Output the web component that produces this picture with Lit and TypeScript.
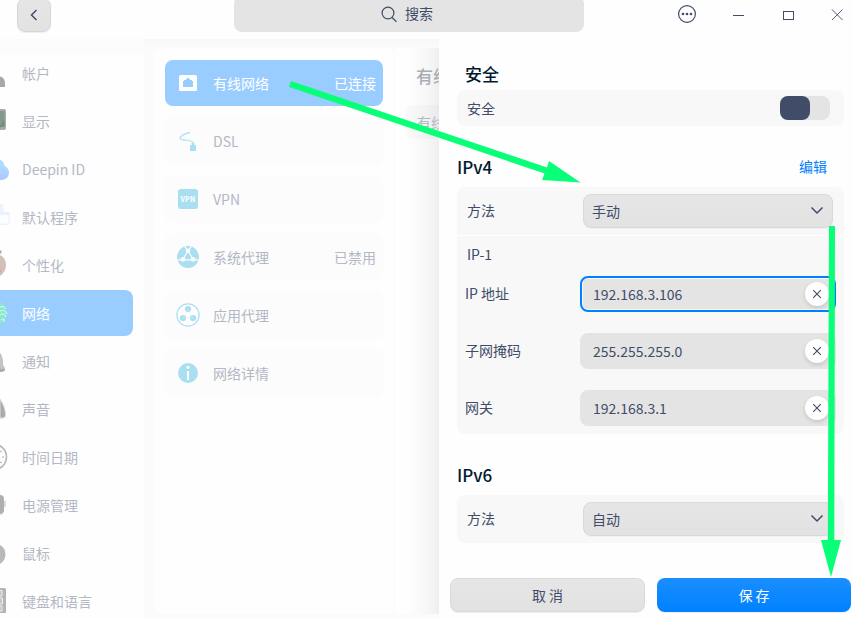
import { LitElement, html, svg, css, nothing, type TemplateResult } from "lit";
import { customElement, property } from "lit/decorators.js";
import { classMap } from "lit/directives/class-map.js";

const chevron = html`<svg width="14" height="9" viewBox="0 0 14 9"><path d="M1.5 1.5 L7 7 L12.5 1.5" fill="none" stroke="#414d68" stroke-width="1.5"/></svg>`;

const navIcons: Record<string, TemplateResult> = {
  user: svg`<path d="M0 27.5 Q5 28 5 35 V38 H0 Z" fill="#a8a8a8"/>`,
  display: svg`<rect x="-16" y="12" width="22" height="21" rx="2" fill="#aaa"/><path d="M0 14 H4.5 V28 L0 31 Z" fill="#84998c"/><path d="M0 29 L4.5 22 V30 H0 Z" fill="#71907b"/>`,
  cloud: svg`<path d="M0 14.5 Q4 16 4.5 21 Q9 23 9 28 Q8.5 34 2 35 H0 Z" fill="url(#cloud)"/>`,
  apps: svg`<path d="M0 11 H1.5 Q3.5 11 3.5 13.5 V20 H0 Z" fill="#ebf5ff"/><path d="M-2 19.5 H9.3 V29.5 Q9.3 31.3 7.5 31.3 H-2 Z" fill="#fbfdff" stroke="#e0eeff" stroke-width=".8"/><path d="M0 19.5 H9.3 V22 H0 Z" fill="#e8f3ff"/>`,
  look: svg`<path d="M0 9.5 h1.5 v3 H0z" fill="#aaa"/><path d="M0 14 Q6 17 6 24 Q6 31 0 35 Z" fill="#d0c1b8"/><path d="M0 28 L1.2 30 L0 32 Z" fill="#f38bad"/>`,
  net: svg`<circle cx="-5" cy="24" r="12" fill="#8be8cf"/><g fill="none" stroke="#d6fff2" stroke-width="1"><path d="M0 18 Q4 16 6 20 M0 22 Q5 20 7 25 M0 26 Q4 23 6 28 M1 31 Q5 28 4 33"/></g>`,
  bell: svg`<path d="M0 16 Q3 19 3 26 Q3 29 5 31 L4.5 34 Q2 35 0 35 Z" fill="#c3c3c3"/><path d="M0 32 H5 L4.5 34 L0 35Z" fill="#aaa"/>`,
  sound: svg`<path d="M0 14 Q6 23 5.5 31 Q4.5 34 0 33 Z" fill="#aaa" stroke="#dedede"/>`,
  clock: svg`<circle cx="-6" cy="24" r="12.5" fill="#fcfcfc" stroke="#b5b5b5" stroke-width="1.6"/><path d="M0 19 L2 18 M2 24 H4 M0 29 L2 30" stroke="#aaa"/>`,
  power: svg`<rect x="4" y="20" width="2" height="6" fill="#ddd"/><rect x="-14" y="14" width="18" height="19" rx="4" fill="#afafaf"/><path d="M-5 33.7 H3" stroke="#e8edc8" stroke-width="1"/>`,
  mouse: svg`<path d="M0 16 Q5.5 19 5.5 25.5 Q5 32 0 35 Z" fill="#b9b9b9"/>`,
  keys: svg`<path d="M0 11 H5 Q6 11 6 13 V36 H0 Z" fill="#b4b4b4"/><path d="M0 13.5 H2 V19 H0 M0 21 H2.5 V27 H0 M0 29 H2 V34 H0" fill="#c4c4c4" stroke="#eee"/>`,
};

const netIcons: Record<string, TemplateResult> = {
  wired: svg`<rect x="3" y="4" width="18" height="16" rx="1.5" fill="#fff"/><path d="M7 16 V10 H8 V9 H10 V8 H11 V7 H13 V8 H14 V9 H16 V10 H17 V16 Z" fill="#99ccff"/>`,
  dsl: svg`<path d="M14 3.3 C9 4.5 4.5 7 4 9.3 C4 12 16 10.5 16.8 13.5 V16" fill="none" stroke="#a9dff0" stroke-width="1.2"/><path d="M15.5 14 H18.5 V16 H19 Q20 16 20 17 V22 H14 V17 Q14 16 15.5 16 Z" fill="#a9dff0"/>`,
  vpn: svg`<rect x="2" y="2" width="20" height="20" rx="3" fill="#a9dff0"/><text class="vpn" x="12" y="14.7" text-anchor="middle">VPN</text>`,
  system: svg`<circle cx="12" cy="12" r="11" fill="#a9dff0"/><path d="M12 5.5 L7 14.5 M12 5.5 L17 14.5 M0 14.8 H6 M18 14.8 H24 M7 14.8 H17 M8.5 1 L11 5 M15.5 1 L13 5" stroke="#fdfdfd" stroke-width="1.2" fill="none"/><g fill="#fdfdfd"><circle cx="12" cy="5.8" r="2.4"/><circle cx="7" cy="14.3" r="2.4"/><circle cx="17" cy="14.3" r="2.4"/></g>`,
  app: svg`<circle cx="12" cy="12" r="11.1" fill="#fdfdfd" stroke="#a9dff0" stroke-width="1.2"/><g fill="#a9dff0"><circle cx="12" cy="6" r="3.1"/><circle cx="7" cy="15" r="3.1"/><circle cx="17" cy="15" r="3.1"/></g><path d="M12 6 L7 15 H17 Z" fill="none" stroke="#d9f0f8" stroke-width=".5"/>`,
  info: svg`<circle cx="12" cy="12" r="10" fill="#a9dff0"/><circle cx="12" cy="6.4" r="1.6" fill="#fff"/><rect x="11" y="10" width="2.1" height="9" fill="#fff"/>`,
};

const navItems = [
  ["user", "帐户"], ["display", "显示"], ["cloud", "Deepin ID"], ["apps", "默认程序"],
  ["look", "个性化"], ["net", "网络"], ["bell", "通知"], ["sound", "声音"],
  ["clock", "时间日期"], ["power", "电源管理"], ["mouse", "鼠标"], ["keys", "键盘和语言"],
];

const netItems = [
  ["wired", "有线网络", "已连接"], ["dsl", "DSL", ""], ["vpn", "VPN", ""],
  ["system", "系统代理", "已禁用"], ["app", "应用代理", ""], ["info", "网络详情", ""],
];

@customElement("title-bar")
export class TitleBar extends LitElement {
  static styles = css`
    :host { display: grid; grid-template-columns: 234px 350px 1fr; height: 39px; background: #fefefe; color: #414d68; }
    svg { display: block; }
    .back { box-sizing: border-box; width: 34px; height: 34px; margin: -2px 0 0 17px; border: 1px solid #d7d7d7; border-radius: 8px; background: linear-gradient(#e6e6e6, #e2e2e2); display: flex; align-items: center; justify-content: center; box-shadow: 0 1px 1px #0001; }
    .search { height: 36px; margin-top: -4px; border-radius: 8px; background: #e4e4e4; display: flex; align-items: center; gap: 7px; padding-left: 147px; box-sizing: border-box; }
    .search span { padding-bottom: 2px; }
    .window { display: flex; justify-content: flex-end; padding-right: 5px; height: 30px; align-items: center; }
  `;
  render() {
    return html`
      <div><div class="back"><svg width="10" height="14" viewBox="0 0 10 14"><path d="M7.5 2 L2.5 7 L7.5 12" fill="none" stroke="#414d68" stroke-width="1.5"/></svg></div></div>
      <div class="search"><svg width="17" height="17" viewBox="0 0 17 17"><g fill="none" stroke="#414d68" stroke-width="1.2"><circle cx="7" cy="7" r="5.9"/><path d="M11 11.5 L15.5 15.8"/></g></svg><span>搜索</span></div>
      <div class="window">
        <svg width="176" height="30" viewBox="0 0 176 30"><g fill="none" stroke="#414d68"><circle cx="15" cy="14" r="8.4" stroke-width="1.2"/><path d="M61 15.5 H72"/><rect x="111.5" y="11.5" width="10" height="8"/><path d="M160 9.5 L170.5 20 M170.5 9.5 L160 20" stroke-width=".9"/></g><g fill="#414d68"><circle cx="11" cy="14" r="1.3"/><circle cx="15" cy="14" r="1.3"/><circle cx="19" cy="14" r="1.3"/></g></svg>
      </div>`;
  }
}

@customElement("side-nav")
export class SideNav extends LitElement {
  static styles = css`
    :host { display: block; box-sizing: border-box; width: 144px; padding-top: 10px; overflow: hidden; background: linear-gradient(#fbfbfb, #fcfcfc 15px, #fefefe 17px); color: #b3b8c4; }
    .row { box-sizing: border-box; width: 133px; height: 48px; padding: 1px 0; display: flex; align-items: center; }
    .in { display: flex; align-items: center; width: 133px; height: 46px; }
    .on .in { background: #99ccff; border-radius: 0 8px 8px 0; color: #fff; }
    svg { display: block; width: 12px; height: 48px; margin-right: 10px; }
  `;
  render() {
    return html`${navItems.map(([icon, label]) => html`
      <div class=${classMap({ row: true, on: icon === "net" })}><div class="in">
        <svg viewBox="0 0 12 48"><defs><linearGradient id="cloud" x2="0" y2="1"><stop stop-color="#a9e5ff"/><stop offset="1" stop-color="#b0c7ff"/></linearGradient></defs>${navIcons[icon]}</svg><span>${label}</span>
      </div></div>`)}`;
  }
}

@customElement("network-list")
export class NetworkList extends LitElement {
  static styles = css`
    :host { display: flex; flex-direction: column; gap: 10px; box-sizing: border-box; width: 241px; height: 566px; margin: 9px 0 0 10px; padding: 11px 10px 0 10px; border-radius: 8px; background: #fefefe; color: #b3b8c4; border-right: 1px solid #fafafa; }
    .card { box-sizing: border-box; height: 48px; border-radius: 9px; border: 1px solid transparent; background: #fcfcfc; display: flex; align-items: center; padding: 0 7px 0 11px; }
    .on { background: #99ccff; background-clip: padding-box; color: #fff; }
    svg { display: block; margin-right: 13px; }
    .state { margin-left: auto; }
    .vpn { font: bold 7px "Noto Sans CJK SC", sans-serif; fill: #fff; letter-spacing: .3px; }
  `;
  render() {
    return html`${netItems.map(([icon, label, state]) => html`
      <div class=${classMap({ card: true, on: icon === "wired" })}>
        <svg width="24" height="24" viewBox="0 0 24 24">${netIcons[icon]}</svg><span>${label}</span>
        ${state ? html`<span class="state">${state}</span>` : nothing}
      </div>`)}`;
  }
}

@customElement("address-field")
export class AddressField extends LitElement {
  @property() label = "";
  @property() value = "";
  @property({ type: Boolean }) focused = false;
  static styles = css`
    :host { display: flex; align-items: center; height: 36px; padding-left: 8px; }
    .label { width: 115px; padding-bottom: 2px; }
    .box { box-sizing: border-box; width: 256px; height: 36px; border-radius: 8px; background: #e4e4e4; border: 2px solid #e4e4e4; padding: 0 5px 0 11px; display: flex; align-items: center; justify-content: space-between; }
    .focus { border-color: #0081ff; box-shadow: inset 0 0 0 1px #f8f8f8; }
    .clear { width: 24px; height: 24px; border-radius: 12px; background: #fff; box-shadow: 0 2px 4px #0002; display: flex; align-items: center; justify-content: center; }
  `;
  render() {
    return html`<span class="label">${this.label}</span>
      <div class=${classMap({ box: true, focus: this.focused })}><span>${this.value}</span>
        <span class="clear"><svg width="10" height="10" viewBox="0 0 10 10"><path d="M1.2 1.2 L8.8 8.8 M8.8 1.2 L1.2 8.8" stroke="#414d68" stroke-width="1.1"/></svg></span>
      </div>`;
  }
}

@customElement("edit-drawer")
export class EditDrawer extends LitElement {
  static styles = css`
    :host { display: flex; flex-direction: column; box-sizing: border-box; width: 414px; height: 580px; background: #fefefe; color: #414d68; padding: 22px 2px 7px 11px; }
    .form { padding: 0 7px; width: 387px; }
    .title { font-size: 17px; line-height: 26px; font-weight: 500; color: #001a2e; }
    .indent { padding-left: 8px; }
    .head { display: flex; justify-content: space-between; align-items: center; padding-right: 17px; height: 26px; margin-top: 28px; }
    .link { color: #0081ff; padding-bottom: 2px; }
    .card { background: #f8f8f8; border-radius: 8px; }
    .security { height: 36px; margin-top: 3px; padding: 0 14px 0 10px; display: flex; align-items: center; justify-content: space-between; }
    .switch { width: 50px; height: 24px; border-radius: 8px; background: #e4e4e4; }
    .knob { width: 30px; height: 24px; border-radius: 8px; background: #414d68; }
    .method { height: 48px; box-sizing: border-box; padding: 0 11px 0 10px; display: flex; align-items: center; justify-content: space-between; }
    .method span { padding-bottom: 2px; }
    .top { border-radius: 8px 8px 0 0; margin-top: 7px; }
    .select { box-sizing: border-box; width: 250px; height: 34px; border: 1px solid #d9d9d9; border-radius: 8px; background: linear-gradient(#e6e6e6, #e2e2e2); padding: 0 8px; display: flex; align-items: center; justify-content: space-between; box-shadow: 0 1px 1px #00000008; }
    .select span { padding: 0; margin-top: -1px; }
    .select svg { margin-top: -2px; }
    .fields { height: 198px; box-sizing: border-box; margin-top: 1px; border-radius: 0 0 8px 8px; display: flex; flex-direction: column; }
    .ip { height: 40px; line-height: 36px; padding-left: 10px; }
    .stack { display: flex; flex-direction: column; gap: 21px; }
    .auto { margin-top: 7px; }
    .actions { display: flex; gap: 12px; margin-top: auto; }
    .btn { box-sizing: border-box; width: 195px; height: 34px; border-radius: 8px; border: 1px solid #d9d9d9; background: linear-gradient(#e6e6e6, #e2e2e2); display: flex; align-items: center; justify-content: center; box-shadow: 0 1px 1px #0001; }
    .save { width: 194px; border-color: transparent; background: linear-gradient(#1a8eff, #0081ff) border-box; color: #fff; }
  `;
  render() {
    return html`
      <div class="form">
        <div class="title indent">安全</div>
        <div class="card security"><span>安全</span><div class="switch"><div class="knob"></div></div></div>
        <div class="head"><span class="title">IPv4</span><span class="link">编辑</span></div>
        <div class="card method top"><span>方法</span><div class="select"><span>手动</span>${chevron}</div></div>
        <div class="card fields">
          <div class="ip">IP-1</div>
          <div class="stack">
            <address-field label="IP 地址" value="192.168.3.106" focused></address-field>
            <address-field label="子网掩码" value="255.255.255.0"></address-field>
            <address-field label="网关" value="192.168.3.1"></address-field>
          </div>
        </div>
        <div class="head"><span class="title">IPv6</span></div>
        <div class="card method auto"><span>方法</span><div class="select"><span>自动</span>${chevron}</div></div>
      </div>
      <div class="actions"><div class="btn">取 消</div><div class="btn save">保 存</div></div>`;
  }
}

@customElement("app-root")
export class AppRoot extends LitElement {
  static styles = css`
    :host { display: block; position: relative; width: 853px; height: 619px; overflow: hidden; background: #fefefe; font: 14px/20px "Noto Sans CJK SC", sans-serif; }
    .body { display: flex; height: 580px; background: linear-gradient(#f8f8f8, #fbfbfb 12px); }
    .detail { box-sizing: border-box; width: 44px; height: 566px; margin-top: 9px; padding: 18px 0 0 10px; overflow: hidden; white-space: nowrap; color: #b3b8c4; background: linear-gradient(90deg, #fefefe 12px, #fafafa 24px, #f6f6f6 34px, #eeeeee); }
    .name { font-size: 17px; line-height: 20px; font-weight: 500; padding-left: 11px; color: #a9adb5; }
    .item { margin-top: 19px; height: 34px; line-height: 34px; padding-left: 12px; border-radius: 8px 0 0 8px; background: #00000005; }
    .marks { position: absolute; left: 0; top: 0; pointer-events: none; }
  `;
  render() {
    return html`
      <title-bar></title-bar>
      <div class="body">
        <side-nav></side-nav>
        <network-list></network-list>
        <div class="detail"><div class="name">有线</div><div class="item">有线</div></div>
        <edit-drawer></edit-drawer>
      </div>
      <svg class="marks" width="853" height="619" viewBox="0 0 853 619" fill="#0aff78">
        <path d="M291 81 L547 167.5 L549 161 L580.5 182.5 L542 180 L544.5 173.5 L289 87 Z"/>
        <path d="M829 226 H835 L834.3 540 H841 L831 577 L821 540 H827.8 Z"/>
      </svg>`;
  }
}
